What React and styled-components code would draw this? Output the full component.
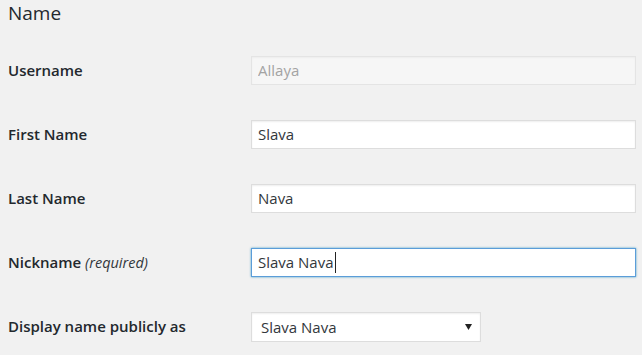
import React from "react"
import styled, { createGlobalStyle } from "styled-components"

const GlobalStyle = createGlobalStyle`
  html, body {
    margin: 0;
    padding: 0;
    background: #f1f1f1;
  }
  body {
    font-family: "Open Sans", "Liberation Sans", sans-serif;
    color: #23282d;
  }
`

const Page = styled.div`
  padding: 0 6px 0 8px;
  width: 642px;
  height: 355px;
  box-sizing: border-box;
`

const Heading = styled.h2`
  margin: 0 0 12px;
  font-size: 19px;
  line-height: 26px;
  font-weight: 400;
  color: #23282d;
`

const Table = styled.div`
  display: grid;
  grid-template-columns: 243px 1fr;
  grid-auto-rows: 64px;
  align-items: center;
`

const Label = styled.label`
  font-size: 15px;
  font-weight: 600;
  line-height: 20px;
  color: #23282d;
`

const Note = styled.span`
  font-size: 14.5px;
  font-weight: 400;
  font-style: italic;
  color: #32373c;
`

const TextInput = styled.input`
  box-sizing: border-box;
  width: 385px;
  height: 29px;
  margin: 0;
  padding: 3px 6px;
  font-family: inherit;
  font-size: 15px;
  color: #32373c;
  background: #fff;
  border: 1px solid #ddd;
  box-shadow: inset 0 1px 2px rgba(0, 0, 0, 0.07);
  outline: none;

  &:disabled {
    background: #f6f6f6;
    border-color: #e4e4e4;
    color: #a3a3a3;
    box-shadow: inset 0 1px 2px rgba(0, 0, 0, 0.04);
  }
`

const FocusedField = styled.div`
  box-sizing: border-box;
  width: 385px;
  height: 29px;
  padding: 0 6px;
  display: flex;
  align-items: center;
  font-size: 15px;
  color: #32373c;
  background: #fff;
  border: 1px solid #5b9dd9;
  box-shadow: 0 0 2px rgba(30, 140, 190, 0.8);
`

const Caret = styled.span`
  display: inline-block;
  width: 1px;
  height: 21px;
  margin-left: 1px;
  background: #222;
`

const SelectWrap = styled.div`
  position: relative;
  width: 230px;
  margin-top: 2px;
`

const Select = styled.select`
  box-sizing: border-box;
  width: 230px;
  height: 30px;
  margin: 0;
  padding: 2px 24px 2px 9px;
  font-family: inherit;
  font-size: 15px;
  color: #32373c;
  background: #fff;
  border: 1px solid #ddd;
  box-shadow: inset 0 1px 2px rgba(0, 0, 0, 0.07);
  appearance: none;
  -webkit-appearance: none;
  outline: none;
`

const Arrow = styled.svg`
  position: absolute;
  right: 9px;
  top: 12px;
  pointer-events: none;
`

const rows = [
  { label: "Username", value: "Allaya", disabled: true },
  { label: "First Name", value: "Slava" },
  { label: "Last Name", value: "Nava" },
]

export default function App() {
  return (
    <Page>
      <GlobalStyle />
      <Heading>Name</Heading>
      <Table>
        {rows.map((r) => (
          <React.Fragment key={r.label}>
            <Label>{r.label}</Label>
            <div>
              <TextInput type="text" value={r.value} disabled={r.disabled} readOnly />
            </div>
          </React.Fragment>
        ))}

        <Label>
          Nickname <Note>(required)</Note>
        </Label>
        <div>
          <FocusedField>
            Slava Nava
            <Caret />
          </FocusedField>
        </div>

        <Label>Display name publicly as</Label>
        <div>
          <SelectWrap>
            <Select defaultValue="Slava Nava">
              <option>Slava Nava</option>
              <option>Allaya</option>
              <option>Slava</option>
              <option>Nava</option>
            </Select>
            <Arrow width="7" height="6" viewBox="0 0 7 6">
              <path d="M0 0 H7 L3.5 6 Z" fill="#222" />
            </Arrow>
          </SelectWrap>
        </div>
      </Table>
    </Page>
  )
}
